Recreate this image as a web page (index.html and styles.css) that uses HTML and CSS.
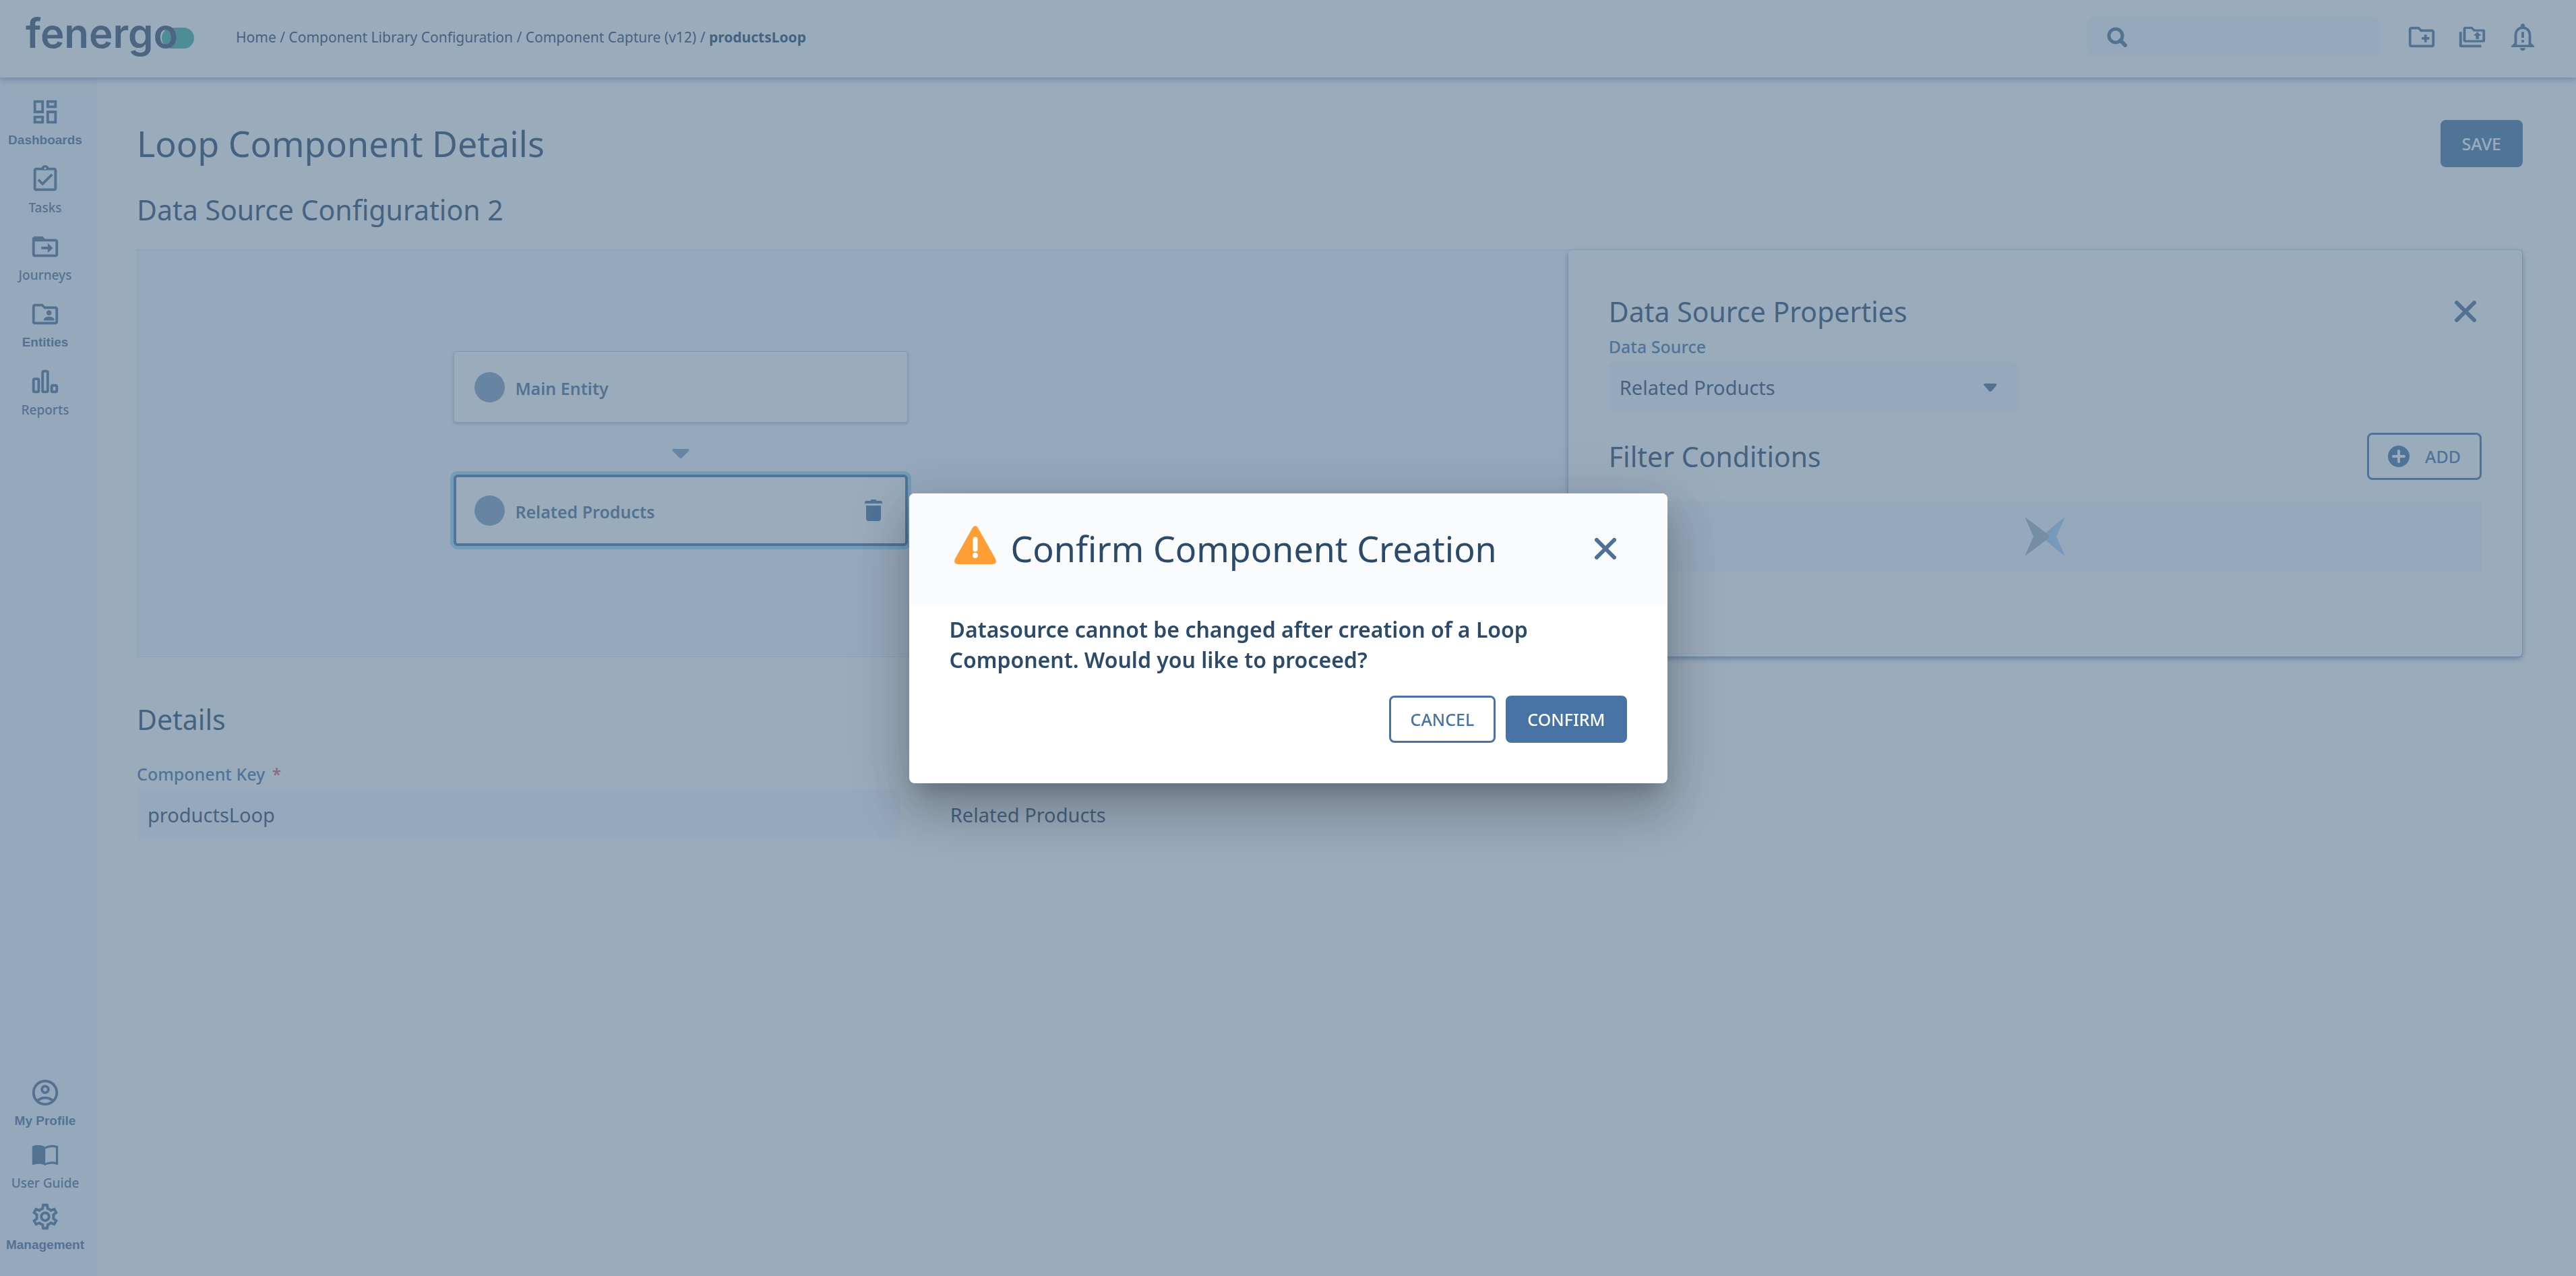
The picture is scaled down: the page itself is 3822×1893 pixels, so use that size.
FILE: index.html
```html
<!DOCTYPE html>
<html lang="en">
<head>
    <meta charset="UTF-8">
    <meta name="viewport" content="width=device-width, initial-scale=1.0">
    <title>Loop Component Details</title>
    <link rel="stylesheet" href="styles.css">
</head>
<body>
    <header class="topbar">
        <a class="logo" href="#">fenergo</a>
        <nav class="breadcrumb">
            <a href="#">Home</a> / <a href="#">Component Library Configuration</a> / <a href="#">Component Capture (v12)</a> / <strong>productsLoop</strong>
        </nav>
        <div class="search">
            <svg class="search-icon" viewBox="0 0 30 30"><circle cx="13" cy="13" r="10" fill="none" stroke="currentColor" stroke-width="5"/><path d="M20 20l7 7" stroke="currentColor" stroke-width="6" stroke-linecap="round"/></svg>
            <input type="text" aria-label="Search">
        </div>
        <div class="actions">
            <button class="icon-btn" aria-label="New folder"><svg class="icon" viewBox="0 0 24 24"><path d="M20 6h-8l-2-2H4c-1.100 0-2 .9-2 2v12c0 1.100.9 2 2 2h16c1.100 0 2-.9 2-2V8c0-1.100-.9-2-2-2zm0 12H4V6h5.200l2 2H20v10zm-8-4h2v2h2v-2h2v-2h-2v-2h-2v2h-2v2z"/></svg></button>
            <button class="icon-btn" aria-label="Open folders"><svg class="icon" viewBox="0 0 24 24"><path fill-rule="evenodd" d="M4 8H2v10.500A1.500 1.500 0 0 0 3.500 20H19v-2H4V8zM20.500 6H14l-2-2H6.500A1.500 1.500 0 0 0 5 5.500v9A1.500 1.500 0 0 0 6.500 16h14a1.500 1.500 0 0 0 1.500-1.500v-7A1.500 1.500 0 0 0 20.500 6zM20 14.300H7V5.700h4.200l2 2H20v6.600zM14.800 13.500h2.400V11H19l-3-3-3 3h1.800z"/></svg></button>
            <button class="icon-btn" aria-label="Notifications"><svg class="icon" viewBox="0 0 24 24"><path d="M10 20.500h4a2 2 0 0 1-4 0zM12 1.500c-.9 0-1.600.7-1.600 1.600v.8C7.400 4.700 5.500 7.300 5.500 10.500v6L3 19v.8h18V19l-2.500-2.500v-6c0-3.200-1.900-5.800-4.900-6.600v-.8c0-.9-.7-1.600-1.600-1.600zm4.500 16.500h-9v-7.500C7.500 7.800 9.300 5.700 12 5.700s4.500 2.100 4.500 4.800V18zM11 8h2v4.500h-2zM11 14.200h2v2h-2z"/></svg></button>
        </div>
    </header>

    <div class="layout">
        <aside class="sidebar">
            <nav class="side-nav">
                <a class="side-item alt" href="#"><svg class="icon" viewBox="0 0 24 24"><path d="M19 5v2h-4V5h4M9 5v6H5V5h4m10 8v6h-4v-6h4M9 17v2H5v-2h4M21 3h-8v6h8V3zM11 3H3v10h8V3zm10 8h-8v10h8V11zm-10 4H3v6h8v-6z"/></svg><span>Dashboards</span></a>
                <a class="side-item" href="#"><svg class="icon" viewBox="0 0 24 24"><path d="M18 9l-1.400-1.400L10 14.200l-2.600-2.600L6 13l4 4zM19 3h-4.200C14.400 1.800 13.300 1 12 1s-2.400.8-2.800 2H5c-1.100 0-2 .9-2 2v14c0 1.100.9 2 2 2h14c1.100 0 2-.9 2-2V5c0-1.100-.9-2-2-2zm-7-.2c.4 0 .8.300.8.700s-.4.800-.8.800-.8-.4-.8-.8.400-.7.800-.7zM19 19H5V5h14v14z"/></svg><span>Tasks</span></a>
                <a class="side-item" href="#"><svg class="icon" viewBox="0 0 24 24"><path d="M20 6h-8l-2-2H4c-1.100 0-2 .9-2 2v12c0 1.100.9 2 2 2h16c1.100 0 2-.9 2-2V8c0-1.100-.9-2-2-2zm0 12H4V8h16v10zm-6-1.300v-2.700H9v-2h5V9.300l4 3.700z"/></svg><span>Journeys</span></a>
                <a class="side-item alt" href="#"><svg class="icon" viewBox="0 0 24 24"><path d="M20 6h-8l-2-2H4c-1.100 0-2 .9-2 2v12c0 1.100.9 2 2 2h16c1.100 0 2-.9 2-2V8c0-1.100-.9-2-2-2zm0 12H4V6h5.200l2 2H20v10zm-5-5c1.100 0 2-.9 2-2s-.9-2-2-2-2 .9-2 2 .9 2 2 2zm-4 4h8v-1c0-1.300-2.700-2-4-2s-4 .7-4 2v1z"/></svg><span>Entities</span></a>
                <a class="side-item" href="#"><svg class="icon" viewBox="0 0 24 24"><g fill="none" stroke="currentColor" stroke-width="2"><rect x="3" y="10" width="4" height="10" rx="1"/><rect x="10" y="4" width="4" height="16" rx="1"/><rect x="17" y="15" width="4" height="5" rx="1"/></g></svg><span>Reports</span></a>
            </nav>
            <nav class="side-nav side-nav-bottom">
                <a class="side-item alt" href="#"><svg class="icon" viewBox="0 0 24 24"><path d="M12 2C6.480 2 2 6.480 2 12s4.480 10 10 10 10-4.480 10-10S17.520 2 12 2zM7.350 18.500C8.660 17.560 10.260 17 12 17s3.340.56 4.650 1.500C15.340 19.440 13.740 20 12 20s-3.340-.56-4.650-1.500zm10.790-1.380C16.450 15.800 14.320 15 12 15s-4.450.8-6.140 2.120C4.700 15.730 4 13.950 4 12c0-4.420 3.580-8 8-8s8 3.580 8 8c0 1.950-.7 3.730-1.860 5.120zM12 6c-1.930 0-3.500 1.570-3.500 3.500S10.070 13 12 13s3.500-1.570 3.500-3.500S13.930 6 12 6zm0 5c-.83 0-1.500-.67-1.500-1.500S11.170 8 12 8s1.500.67 1.500 1.500S12.830 11 12 11z"/></svg><span>My Profile</span></a>
                <a class="side-item" href="#"><svg class="icon" viewBox="0 0 24 24"><path d="M17.500 4.500c-1.950 0-4.050.4-5.500 1.500-1.450-1.100-3.550-1.500-5.500-1.500S3.200 4.800 2 5.500V20c1.400-.5 3-.8 4.500-.8 1.900 0 4 .2 5.500 1.100 1.500-.9 3.600-1.100 5.500-1.100 1.500 0 3.100.3 4.500.8V5.500c-1.200-.7-2.550-1-4.500-1zM20.300 17.800c-1-.3-1.900-.4-2.800-.4-1.700 0-4.100.5-5.400 1.300V7.500c1.300-.8 3.700-1.300 5.400-1.300 1 0 2 .1 2.800.4v11.200z"/></svg><span>User Guide</span></a>
                <a class="side-item alt" href="#"><svg class="icon" viewBox="0 0 24 24"><path d="M19.430 12.980c.04-.32.07-.64.07-.98 0-.34-.03-.66-.07-.98l2.110-1.650c.19-.15.24-.42.12-.64l-2-3.460c-.09-.16-.26-.25-.44-.25-.06 0-.12.01-.17.03l-2.490 1c-.52-.4-1.080-.73-1.690-.98l-.38-2.650C14.460 2.180 14.250 2 14 2h-4c-.25 0-.46.18-.49.42l-.38 2.650c-.61.25-1.170.59-1.690.98l-2.490-1c-.06-.02-.12-.03-.18-.03-.17 0-.34.09-.43.25l-2 3.460c-.13.22-.07.49.12.64l2.110 1.650c-.04.32-.07.65-.07.98 0 .33.03.66.07.98l-2.110 1.650c-.19.15-.24.42-.12.64l2 3.460c.09.16.26.25.44.25.06 0 .12-.01.17-.03l2.490-1c.52.4 1.080.73 1.690.98l.38 2.650c.03.24.24.42.49.42h4c.25 0 .46-.18.49-.42l.38-2.650c.61-.25 1.170-.59 1.690-.98l2.490 1c.06.02.12.03.18.03.17 0 .34-.09.43-.25l2-3.460c.12-.22.07-.49-.12-.64l-2.110-1.650zm-1.980-1.710c.04.31.05.52.05.73 0 .21-.02.43-.05.73l-.14 1.130.89.7 1.080.84-.7 1.210-1.270-.51-1.040-.42-.9.680c-.43.32-.84.56-1.250.73l-1.060.43-.16 1.130-.2 1.350h-1.400l-.19-1.350-.16-1.130-1.060-.43c-.43-.18-.83-.41-1.230-.71l-.91-.7-1.060.43-1.270.51-.7-1.210 1.080-.84.89-.7-.14-1.130c-.03-.31-.05-.54-.05-.74s.02-.43.05-.73l.14-1.130-.89-.7-1.080-.84.7-1.210 1.270.51 1.040.42.9-.68c.43-.32.84-.56 1.250-.73l1.060-.43.16-1.130.2-1.350h1.390l.19 1.350.16 1.130 1.060.43c.43.18.83.41 1.230.71l.91.7 1.060-.43 1.270-.51.7 1.210-1.070.85-.89.7.14 1.130zM12 8c-2.210 0-4 1.790-4 4s1.790 4 4 4 4-1.790 4-4-1.790-4-4-4zm0 6c-1.100 0-2-.9-2-2s.9-2 2-2 2 .9 2 2-.9 2-2 2z"/></svg><span>Management</span></a>
            </nav>
        </aside>

        <main class="content">
            <div class="title-row">
                <h1>Loop Component Details</h1>
                <button class="btn btn-primary">SAVE</button>
            </div>
            <h2 class="section-title">Data Source Configuration 2</h2>

            <section class="source-panel">
                <div class="tree">
                    <div class="node">
                        <span class="node-dot"></span>
                        <span class="node-name">Main Entity</span>
                    </div>
                    <svg class="tree-arrow" viewBox="0 0 26 14"><path d="M3 0h20q4 0 2 3L15 13q-2 2-4 0L1 3Q-1 0 3 0z"/></svg>
                    <div class="node selected">
                        <span class="node-dot"></span>
                        <span class="node-name">Related Products</span>
                        <button class="icon-btn" aria-label="Delete"><svg class="trash" viewBox="0 0 26 32"><path d="M2 9h22v19q0 4-4 4H6q-4 0-4-4zM0 5q0-3 3-3h5q1-2 3-2h4q2 0 3 2h5q3 0 3 3v1H0z"/></svg></button>
                    </div>
                </div>
                <div class="properties">
                    <div class="properties-head">
                        <h2>Data Source Properties</h2>
                        <button class="icon-btn close" aria-label="Close"><svg viewBox="0 0 32 32"><path d="M3 3l26 26M29 3L3 29"/></svg></button>
                    </div>
                    <label for="dataSource">Data Source</label>
                    <div class="select-wrap">
                        <select id="dataSource" class="field">
                            <option>Related Products</option>
                        </select>
                        <svg class="caret" viewBox="0 0 20 12"><path d="M3 0h14q4 0 2 3l-7 8q-2 2-4 0L1 3Q-1 0 3 0z"/></svg>
                    </div>
                    <div class="filter-row">
                        <h2>Filter Conditions</h2>
                        <button class="btn btn-outline btn-add"><svg viewBox="0 0 32 32"><circle cx="16" cy="16" r="16" fill="currentColor"/><path d="M16 8v16M8 16h16" stroke="#fff" stroke-width="4" stroke-linecap="round"/></svg>ADD</button>
                    </div>
                    <div class="loader">
                        <svg viewBox="0 0 58 56"><path d="M58 1Q58-1 56 1L28 24q-4 4 0 8l28 23q2 2 2 0L46 28z" fill="#a6d2ff"/><path d="M0 1Q0-1 2 1l32 24q4 3 0 6L2 55q-2 2-2 0l12-27z" fill="#a5b7c3"/></svg>
                    </div>
                </div>
            </section>

            <h2 class="details-title">Details</h2>
            <div class="details">
                <div class="detail">
                    <label for="componentKey">Component Key <span class="required">*</span></label>
                    <input type="text" id="componentKey" class="field" value="productsLoop">
                </div>
                <div class="detail">
                    <label for="detailSource">Data Source</label>
                    <input type="text" id="detailSource" class="field readonly" value="Related Products" readonly>
                </div>
            </div>
        </main>
    </div>

    <div class="overlay">
        <div class="dialog" role="dialog" aria-labelledby="dialogTitle">
            <div class="dialog-head">
                <svg class="warning" viewBox="0 0 62 57"><path d="M27 3q4-6 8 0l26 46q3 7-4 8H5q-7-1-4-8z" fill="#ff9e35"/><path d="M31 20v15" stroke="#fff" stroke-width="7" stroke-linecap="round"/><circle cx="31" cy="44" r="4" fill="#fff"/></svg>
                <h1 id="dialogTitle">Confirm Component Creation</h1>
                <button class="icon-btn close" aria-label="Close dialog"><svg viewBox="0 0 32 32"><path d="M3 3l26 26M29 3L3 29"/></svg></button>
            </div>
            <div class="dialog-body">
                <p>Datasource cannot be changed after creation of a Loop Component. Would you like to proceed?</p>
                <div class="dialog-actions">
                    <button class="btn btn-outline">CANCEL</button>
                    <button class="btn btn-primary">CONFIRM</button>
                </div>
            </div>
        </div>
    </div>
</body>
</html>
```

FILE: styles.css
```css
* {
    margin: 0;
    padding: 0;
    box-sizing: border-box;
}

body {
    font-family: "Noto Sans", "Open Sans", sans-serif;
    font-size: 29px;
    color: #2c4a69;
    background: #fff;
    min-height: 100vh;
    display: flex;
    flex-direction: column;
}

a {
    color: inherit;
    text-decoration: none;
}

button, input, select {
    font: inherit;
    color: inherit;
    border: none;
    background: none;
}

button {
    cursor: pointer;
}

svg {
    display: block;
    flex-shrink: 0;
}

h1, h2 {
    font-weight: 400;
}

h1 {
    font-size: 52px;
    line-height: 72px;
}

h2 {
    font-size: 41px;
    line-height: 56px;
}

label {
    display: block;
    font-size: 25px;
    line-height: 34px;
    font-weight: 500;
    color: #4774a5;
}

.icon {
    width: 46px;
    height: 46px;
    fill: currentColor;
}

.icon-btn {
    display: flex;
    color: #4f7196;
}

/* top bar */
.topbar {
    position: relative;
    z-index: 1;
    height: 115px;
    display: flex;
    align-items: center;
    padding: 0 56px 6px 38px;
    background: #fff;
    box-shadow: 0 4px 8px rgba(28, 72, 118, 0.4);
}

.logo {
    position: relative;
    font-family: Inter, sans-serif;
    font-size: 60px;
    line-height: 72px;
    font-weight: 600;
    width: 250px;
    padding-bottom: 12px;
    color: #3d5069;
    z-index: 0;
}

.logo::after {
    content: "";
    position: absolute;
    z-index: -1;
    right: 0;
    top: 28px;
    width: 48px;
    height: 31px;
    border-radius: 16px;
    background: #42b3a0;
}

.breadcrumb {
    flex: 1;
    margin-left: 62px;
    font-size: 21px;
    line-height: 30px;
}

.search {
    width: 434px;
    height: 59px;
    display: flex;
    align-items: center;
    gap: 16px;
    padding: 0 29px;
    border-radius: 8px;
    background: #f5f8fe;
    color: #4f7196;
}

.search-icon {
    width: 30px;
    height: 30px;
}

.search input {
    flex: 1;
    min-width: 0;
}

.actions {
    display: flex;
    gap: 29px;
    margin-left: 39px;
}

/* sidebar */
.layout {
    flex: 1;
    display: flex;
}

.sidebar {
    width: 143px;
    display: flex;
    flex-direction: column;
    justify-content: space-between;
    padding: 28px 8px 31px 0;
    background: #f5f8fe;
    border-right: 1px solid #e2ebf6;
}

.side-nav {
    display: flex;
    flex-direction: column;
    gap: 20px;
}

.side-nav-bottom {
    gap: 12px;
}

.side-item {
    display: flex;
    flex-direction: column;
    align-items: center;
    gap: 4px;
    font-size: 19px;
    line-height: 30px;
    font-weight: 500;
    color: #4f7196;
}

.side-item.alt {
    font-family: "Liberation Sans", sans-serif;
    font-weight: 700;
}

/* content */
.content {
    flex: 1;
    padding: 62px 79px 60px 60px;
}

.title-row {
    display: flex;
    align-items: center;
    justify-content: space-between;
}

.section-title {
    margin-top: 34px;
}

.btn {
    display: flex;
    align-items: center;
    justify-content: center;
    height: 70px;
    padding: 0 29px;
    border: 3px solid #4774a5;
    border-radius: 8px;
    font-size: 25px;
    line-height: 36px;
    font-weight: 500;
}

.btn-primary {
    background: #4774a5;
    color: #fff;
}

.btn-outline {
    color: #4774a5;
}

.btn-add {
    gap: 23px;
    padding: 0 28px;
}

.btn-add svg {
    width: 32px;
    height: 32px;
}

.source-panel {
    display: flex;
    margin-top: 31px;
    height: 605px;
    background: #f5f8fe;
    border: 1px solid #dfe8f3;
}

.tree {
    flex: 0 0 60%;
    display: flex;
    flex-direction: column;
    align-items: center;
    padding-top: 150px;
    padding-right: 510px;
}

.node {
    width: 674px;
    height: 106px;
    display: flex;
    align-items: center;
    gap: 15px;
    padding: 0 37px 0 30px;
    background: #fff;
    border: 1px solid #bccddf;
    border-radius: 4px;
    box-shadow: 0 2px 4px rgba(28, 72, 118, 0.3);
    color: #4f7196;
}

.node.selected {
    padding: 0 34px 0 27px;
    border: 4px solid #4774a5;
    border-radius: 6px;
    box-shadow: 0 0 0 5px #9fdcf8;
}

.node-dot {
    width: 45px;
    height: 45px;
    border-radius: 50%;
    background: #81a0be;
}

.node-name {
    flex: 1;
    padding-top: 4px;
    font-size: 25px;
    line-height: 34px;
    font-weight: 600;
}

.tree-arrow {
    width: 26px;
    height: 14px;
    margin: 39px 0 24px;
    fill: #81a0be;
}

.trash {
    width: 26px;
    height: 32px;
    fill: #4774a5;
}

.properties {
    flex: 1;
    padding: 63px 60px 60px;
    background: #fff;
    border-radius: 6px;
    box-shadow: 0 3px 8px rgba(28, 72, 118, 0.6);
}

.properties-head {
    display: flex;
    align-items: center;
    justify-content: space-between;
}

.close svg {
    width: 32px;
    height: 32px;
    margin-right: 8px;
    fill: none;
    stroke: currentColor;
    stroke-width: 6;
    stroke-linecap: round;
}

.properties label {
    margin-top: 7px;
}

.select-wrap {
    position: relative;
    width: 608px;
    margin-top: 6px;
}

.field {
    display: block;
    width: 100%;
    height: 74px;
    padding: 0 16px;
    border-radius: 8px;
    background: #f5f8fe;
    appearance: none;
}

.readonly {
    background: none;
}

.caret {
    position: absolute;
    right: 32px;
    top: 32px;
    width: 20px;
    height: 12px;
    fill: #4f7196;
    pointer-events: none;
}

.filter-row {
    display: flex;
    align-items: center;
    justify-content: space-between;
    margin-top: 31px;
}

.loader {
    height: 105px;
    display: flex;
    align-items: center;
    justify-content: center;
    margin-top: 31px;
    background: #f5f8fe;
}

.loader svg {
    width: 58px;
    height: 56px;
}

/* details */
.details-title {
    margin-top: 64px;
}

.details {
    display: flex;
    gap: 58px;
    margin-top: 36px;
}

.detail {
    width: 32%;
}

.detail label {
    margin-bottom: 6px;
}

.required {
    margin-left: 4px;
    color: #d9566f;
}

/* dialog */
.overlay {
    position: fixed;
    inset: 0;
    z-index: 10;
    display: flex;
    align-items: center;
    justify-content: center;
    background: rgba(86, 115, 143, 0.6);
}

.dialog {
    width: 1125px;
    overflow: hidden;
    border-radius: 8px;
    background: #fff;
    box-shadow: 0 21px 28px -13px rgba(0, 0, 0, 0.2), 0 45px 71px 6px rgba(0, 0, 0, 0.14), 0 17px 86px 15px rgba(0, 0, 0, 0.12);
}

.dialog-head {
    display: flex;
    align-items: center;
    gap: 22px;
    height: 165px;
    padding: 0 68px 0 67px;
    background: #f9fbfd;
}

.dialog-head h1 {
    flex: 1;
}

.warning {
    width: 62px;
    height: 57px;
    margin-bottom: 12px;
}

.dialog-body {
    padding: 14px 60px 60px;
}

.dialog-body p {
    font-size: 32px;
    line-height: 45px;
    font-weight: 600;
}

.dialog-actions {
    display: flex;
    justify-content: flex-end;
    gap: 15px;
    margin-top: 31px;
}
```
